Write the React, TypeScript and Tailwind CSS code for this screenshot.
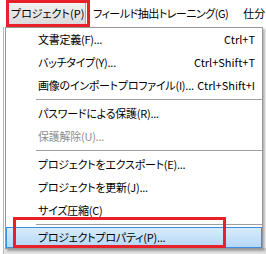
type Row =
  | { kind: "sep" }
  | { kind: "item"; label: string; shortcut?: string; disabled?: boolean; active?: boolean };

const rows: Row[] = [
  { kind: "item", label: "文書定義(F)...", shortcut: "Ctrl+T" },
  { kind: "item", label: "バッチタイプ(Y)...", shortcut: "Ctrl+Shift+T" },
  { kind: "item", label: "画像のインポートプロファイル(I)...", shortcut: "Ctrl+Shift+I" },
  { kind: "sep" },
  { kind: "item", label: "パスワードによる保護(R)..." },
  { kind: "item", label: "保護解除(U)...", disabled: true },
  { kind: "sep" },
  { kind: "item", label: "プロジェクトをエクスポート(E)..." },
  { kind: "item", label: "プロジェクトを更新(J)..." },
  { kind: "item", label: "サイズ圧縮(C)" },
  { kind: "sep" },
  { kind: "item", label: "プロジェクトプロパティ(P)...", active: true },
];

export default function App() {
  return (
    <div className="relative h-[254px] w-[266px] overflow-hidden bg-white font-['Noto_Sans_CJK_JP',sans-serif] text-[11px] text-black [font-feature-settings:'palt']">
      {/* Menu bar */}
      <div className="flex h-[27px] items-center bg-white">
        <div className="ml-[8px] flex h-[24px] w-[78px] shrink-0 items-center whitespace-nowrap border border-[#a9a9a9] bg-gradient-to-b from-[#f3f3f3] to-[#d9d9d9] pl-[2px]">
          プロジェクト(P)
        </div>
        <div className="ml-[7px] whitespace-nowrap tracking-[-0.5px]">フィールド抽出トレーニング(G)</div>
        <div className="ml-[15px] whitespace-nowrap">仕分</div>
      </div>

      {/* Window body under the menu */}
      <div className="flex h-[227px]">
        <div className="ml-[3px] w-px bg-[#b9b9b9]" />
        <div className="h-[6px] flex-1 self-end bg-[#e2e2e2]" />
      </div>

      {/* Dropdown */}
      <div className="absolute left-[5px] top-[27px] w-[258px] border border-[#979797] bg-white shadow-[2px_2px_2px_rgba(0,0,0,0.3)]">
        {rows.map((row, i) =>
          row.kind === "sep" ? (
            <div key={i} className="flex h-[5px] items-center pl-[30px]">
              <div className="h-px w-full bg-[#a0a0a0]" />
            </div>
          ) : row.active ? (
            <div
              key={i}
              className="flex h-[21px] items-center border border-[#3c8fe0] bg-gradient-to-b from-[#d9ecfc] to-[#b3d7f7] pl-[31px] pr-[7px]"
            >
              <span className="whitespace-nowrap tracking-[-0.25px]">{row.label}</span>
            </div>
          ) : (
            <div
              key={i}
              className={`flex h-[23px] items-center justify-between pl-[32px] pr-[7px] ${
                row.disabled ? "text-[#8d8d8d]" : ""
              }`}
            >
              <span className="whitespace-nowrap tracking-[-0.25px]">{row.label}</span>
              {row.shortcut && <span className="whitespace-nowrap">{row.shortcut}</span>}
            </div>
          )
        )}
      </div>

      {/* Annotation boxes */}
      <div className="absolute left-[6px] top-0 h-[27px] w-[84px] border-[3px] border-[#e8202a]" />
      <div className="absolute left-[13px] top-[217px] h-[31px] w-[213px] border-[3px] border-[#e8202a]" />
    </div>
  );
}
